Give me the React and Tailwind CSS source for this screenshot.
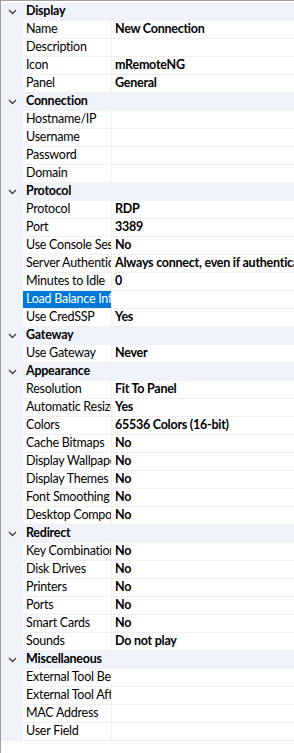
const groups = [
  {
    name: 'Display',
    items: [
      ['Name', 'New Connection'],
      ['Description', ''],
      ['Icon', 'mRemoteNG'],
      ['Panel', 'General'],
    ],
  },
  {
    name: 'Connection',
    items: [
      ['Hostname/IP', ''],
      ['Username', ''],
      ['Password', ''],
      ['Domain', ''],
    ],
  },
  {
    name: 'Protocol',
    items: [
      ['Protocol', 'RDP'],
      ['Port', '3389'],
      ['Use Console Session', 'No'],
      ['Server Authentication', 'Always connect, even if authentication fails'],
      ['Minutes to Idle', '0'],
      ['Load Balance Info', '', true],
      ['Use CredSSP', 'Yes'],
    ],
  },
  {
    name: 'Gateway',
    items: [['Use Gateway', 'Never']],
  },
  {
    name: 'Appearance',
    items: [
      ['Resolution', 'Fit To Panel'],
      ['Automatic Resize', 'Yes'],
      ['Colors', '65536 Colors (16-bit)'],
      ['Cache Bitmaps', 'No'],
      ['Display Wallpaper', 'No'],
      ['Display Themes', 'No'],
      ['Font Smoothing', 'No'],
      ['Desktop Composition', 'No'],
    ],
  },
  {
    name: 'Redirect',
    items: [
      ['Key Combinations', 'No'],
      ['Disk Drives', 'No'],
      ['Printers', 'No'],
      ['Ports', 'No'],
      ['Smart Cards', 'No'],
      ['Sounds', 'Do not play'],
    ],
  },
  {
    name: 'Miscellaneous',
    items: [
      ['External Tool Before', ''],
      ['External Tool After', ''],
      ['MAC Address', ''],
      ['User Field', ''],
    ],
  },
];

function Chevron() {
  return (
    <svg width="9" height="6" viewBox="0 0 9 6" className="shrink-0">
      <path d="M1 1 L4.5 4.5 L8 1" fill="none" stroke="#404040" strokeWidth="1.3" />
    </svg>
  );
}

export default function App() {
  return (
    <div
      className="h-[753px] w-[294px] overflow-hidden border-l border-t border-[#a0a0a0] bg-white pt-[2px] text-[12.5px] leading-none tracking-[-0.25px] text-black"
      style={{ fontFamily: 'Lato, "Segoe UI", "Noto Sans", sans-serif' }}
    >
      {groups.map(g => (
        <div key={g.name}>
          {/* Category header */}
          <div className="flex h-[18px] items-center border-b border-[#f0f4fa] bg-[#f0f4fa]">
            <div className="flex w-[22px] justify-center pl-[1px]">
              <Chevron />
            </div>
            <span className="pl-[3px] font-bold">{g.name}</span>
          </div>
          {g.items.map(([label, value, selected]) => (
            <div key={label} className="flex h-[18px]">
              <div className="w-[22px] shrink-0 bg-[#f0f4fa]" />
              <div
                className={`flex w-[89px] shrink-0 items-center overflow-hidden whitespace-nowrap border-b border-r border-[#f0f0f0] pl-[3px] ${
                  selected ? 'bg-[#0078d7] text-white' : ''
                }`}
              >
                {label}
              </div>
              <div className="flex min-w-0 flex-1 items-center overflow-hidden whitespace-nowrap border-b border-[#f0f0f0] pl-[3px] font-bold">
                {value}
              </div>
            </div>
          ))}
        </div>
      ))}
    </div>
  );
}
